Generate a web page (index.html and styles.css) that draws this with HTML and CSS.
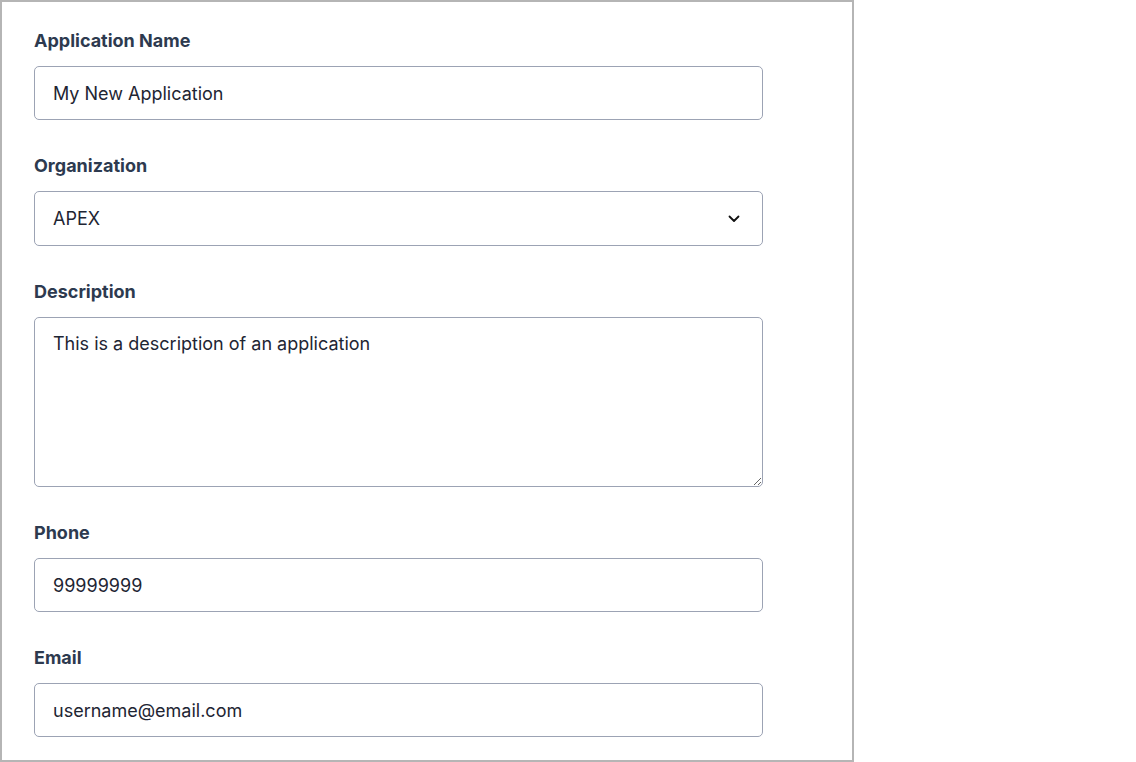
FILE: index.html
```html
<!DOCTYPE html>
<html>
<head>
<meta charset="utf-8">
<link rel="stylesheet" href="styles.css">
</head>
<body>
<div class="panel">
  <form class="form">
    <div class="field">
      <label class="label">Application Name</label>
      <input class="control" type="text" value="My New Application">
    </div>
    <div class="field">
      <label class="label">Organization</label>
      <div class="select">
        <span>APEX</span>
        <svg class="chev" width="12" height="8" viewBox="0 0 12 8"><path d="M1.5 1.5 L6 6 L10.5 1.5" fill="none" stroke="#111" stroke-width="1.8" stroke-linecap="round" stroke-linejoin="round"/></svg>
      </div>
    </div>
    <div class="field">
      <label class="label">Description</label>
      <textarea class="control area">This is a description of an application</textarea>
    </div>
    <div class="field">
      <label class="label">Phone</label>
      <input class="control" type="text" value="99999999">
    </div>
    <div class="field">
      <label class="label">Email</label>
      <input class="control" type="text" value="username@email.com">
    </div>
  </form>
</div>
</body>
</html>
```

FILE: styles.css
```css
* { box-sizing: border-box; }
html, body { margin: 0; padding: 0; background: #fff; }
body { font-family: Inter, "Noto Sans", sans-serif; }
.panel {
  width: 854px;
  height: 762px;
  border: 2px solid #b5b5b5;
  padding: 27px 32px 0 32px;
  overflow: hidden;
}
.form { display: flex; flex-direction: column; gap: 34px; width: 729px; }
.field { display: flex; flex-direction: column; gap: 13px; }
.label {
  font-size: 18px;
  font-weight: 700;
  line-height: 24px;
  color: #2d3a4f;
}
.control {
  display: block;
  width: 729px;
  height: 54px;
  border: 1px solid #9ca3b4;
  border-radius: 5px;
  padding: 0 18px;
  font-family: Inter, "Noto Sans", sans-serif;
  font-size: 18px;
  color: #1e2533;
  background: #fff;
  outline: none;
}
.select {
  display: flex;
  align-items: center;
  justify-content: space-between;
  width: 729px;
  height: 55px;
  border: 1px solid #9ca3b4;
  border-radius: 5px;
  padding: 0 22px 0 18px;
  font-size: 18px;
  color: #1e2533;
}
.area {
  height: 170px;
  padding: 14px 18px;
  line-height: 24px;
  resize: both;
}
```
